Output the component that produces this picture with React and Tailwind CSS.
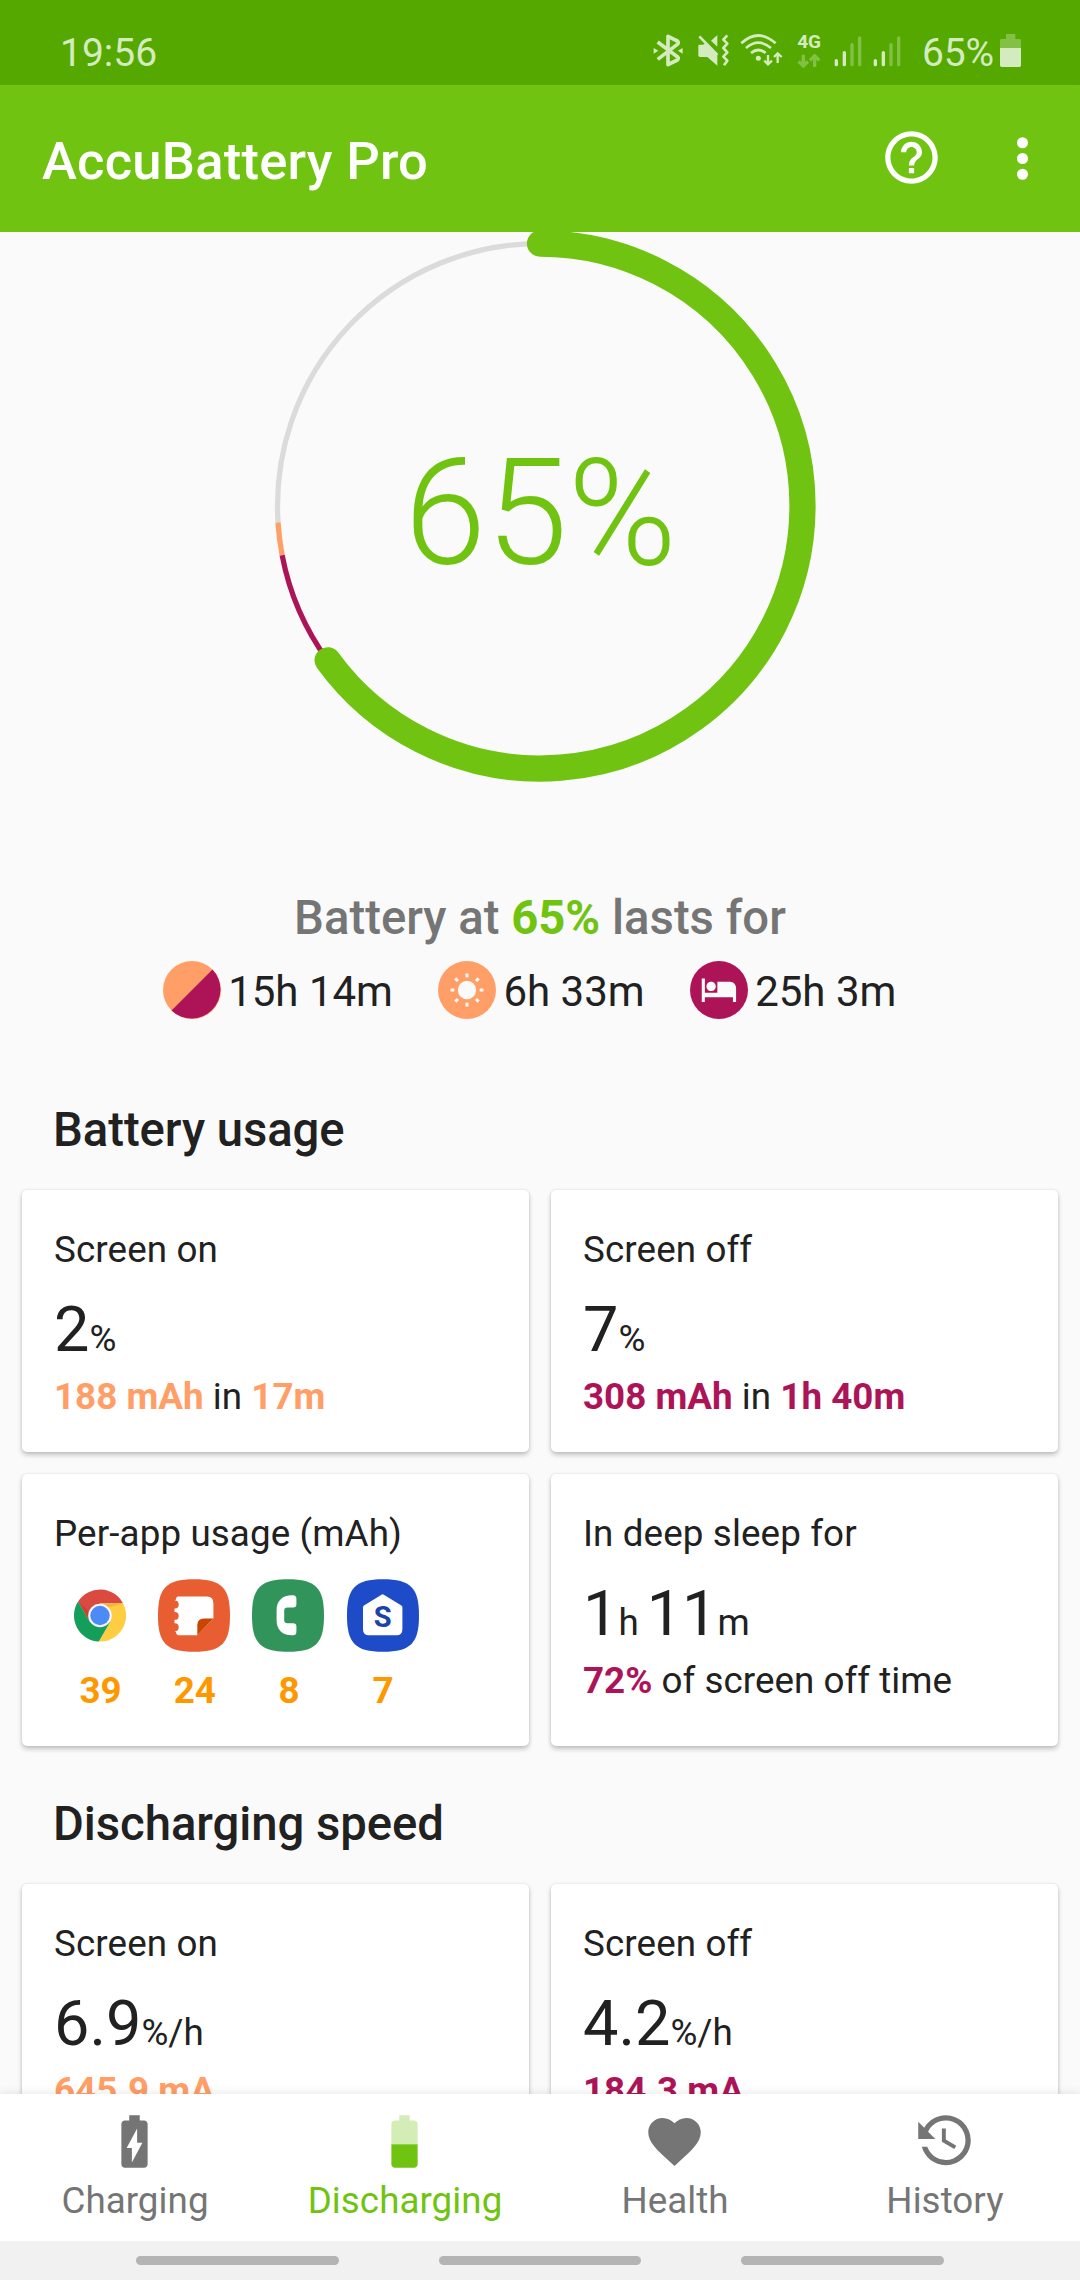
import React from "react";

const LIGHT = "#d4ebbf";
const DIM = "#82c143";

function BluetoothIcon() {
  return (
    <svg className="w-[30px] h-[38px]" viewBox="94 96 90 114" fill="none" stroke={LIGHT} strokeWidth="11">
      <path d="M108 126L167 170Q173 175 167 180L139 194V109L167 123Q173 128 167 133L108 178" strokeLinejoin="round" />
      <path d="M96 144L110 152L96 161Z M183 144L169 152L183 161Z" fill={LIGHT} stroke="none" />
    </svg>
  );
}

function MuteVibrateIcon() {
  return (
    <svg className="ml-[14px] w-[33px] h-[38px]" viewBox="227 96 99 114">
      <path d="M231 137Q231 134 234 134H245L252 130L288 166V197L258 171H236Q231 171 231 166Z" fill={LIGHT} />
      <path d="M269 122L288 105V140Z" fill={LIGHT} />
      <path d="M234 109L288 165" stroke={LIGHT} strokeWidth="8" />
      <path d="M318 106L306 119L318 131L306 144L318 157L306 170L318 182L308 196" fill="none" stroke={LIGHT} strokeWidth="8" strokeLinejoin="round" />
    </svg>
  );
}

function WifiIcon() {
  return (
    <svg className="ml-[10px] w-[43px] h-[38px]" viewBox="357 96 129 114" fill="none" stroke={LIGHT} strokeWidth="8">
      <path d="M361 130Q412 83 464 130" />
      <path d="M375 144Q412 112 450 144" />
      <path d="M390 159Q412 141 434 159" />
      <circle cx="412" cy="175" r="7.5" fill={LIGHT} stroke="none" />
      <path d="M441 165V192M430 182L441 193L453 182" strokeWidth="7" />
      <path d="M470 189V161M459 171L470 160L482 171" strokeWidth="7" />
    </svg>
  );
}

function DataIcon() {
  return (
    <div className="ml-[14px] flex w-[24px] flex-col items-center">
      <span className="h-[20px] text-[19px] leading-[20px] font-bold tracking-[-0.3px] text-[#d4ebbf]">4G</span>
      <svg className="mt-[2px] h-[14px] w-[24px]" viewBox="526 163 72 42" fill="none" stroke={DIM} strokeWidth="10">
        <path d="M545 165V198M531 185L545 199L559 185" />
        <path d="M579 202V169M565 182L579 168L593 182" />
      </svg>
    </div>
  );
}

function SignalIcon({ className }) {
  return (
    <svg className={className} viewBox="640 96 84 114" strokeWidth="10" strokeLinecap="round">
      <path d="M647 182V194M671 158V194" stroke={LIGHT} />
      <path d="M694 134V194M717 114V194" stroke={DIM} />
    </svg>
  );
}

function StatusBar() {
  return (
    <div className="flex h-[85px] shrink-0 items-start bg-[#55a800] pl-[60px] text-[39px] text-[#d4ebbf]">
      <span className="mt-[30px] leading-[46px]">19:56</span>
      <div className="ml-auto flex items-start pt-[32px] pr-[58px]">
        <BluetoothIcon />
        <MuteVibrateIcon />
        <WifiIcon />
        <DataIcon />
        <SignalIcon className="ml-[13px] h-[38px] w-[28px]" />
        <SignalIcon className="ml-[11px] h-[38px] w-[28px]" />
        <span className="-mt-[2px] ml-[21px] w-[74px] leading-[46px] tracking-[-0.2px] whitespace-nowrap">65%</span>
        <svg className="ml-[3px] h-[38px] w-[23px]" viewBox="1137 96 69 114">
          <path d="M1158 102H1186V117H1199Q1203 117 1203 121V144H1140V121Q1140 117 1144 117H1158Z" fill={DIM} />
          <path d="M1140 144H1203V196Q1203 201 1198 201H1145Q1140 201 1140 196Z" fill={LIGHT} />
        </svg>
      </div>
    </div>
  );
}

function AppBar() {
  return (
    <header className="relative z-10 flex h-[147px] shrink-0 items-center bg-[#70c411] pl-[42px] text-white">
      <h1 className="mt-[4px] text-[52.5px] leading-[62px] font-medium tracking-[0.25px]">AccuBattery Pro</h1>
      <svg className="mr-[48px] ml-auto size-[63px] -translate-y-px" viewBox="0 0 24 24" fill="currentColor">
        <path d="M11 18h2v-2h-2v2zm1-16C6.48 2 2 6.48 2 12s4.48 10 10 10 10-4.48 10-10S17.52 2 12 2zm0 18c-4.41 0-8-3.59-8-8s3.59-8 8-8 8 3.59 8 8-3.59 8-8 8zm0-14c-2.21 0-4 1.79-4 4h2c0-1.1.9-2 2-2s2 .9 2 2c0 2-3 1.75-3 5h2c0-2.25 3-2.5 3-5 0-2.21-1.79-4-4-4z" />
      </svg>
      <svg className="mr-[26px] size-[63px]" viewBox="0 0 24 24" fill="currentColor">
        <circle cx="12" cy="6" r="2.1" />
        <circle cx="12" cy="12" r="2.1" />
        <circle cx="12" cy="18" r="2.1" />
      </svg>
    </header>
  );
}

const R = 262.5;

function polar(percent) {
  const a = (percent / 100) * 2 * Math.PI;
  return [276 + R * Math.sin(a), 276 - R * Math.cos(a)];
}

function arc(from, to) {
  const [x1, y1] = polar(from);
  const [x2, y2] = polar(to);
  return `M${x1} ${y1}A${R} ${R} 0 ${to - from > 50 ? 1 : 0} 1 ${x2} ${y2}`;
}

function Gauge() {
  return (
    <div className="mx-auto -mt-[2.5px] grid size-[552px] shrink-0 place-items-center">
      <svg className="col-start-1 row-start-1 size-[552px]" viewBox="0 0 552 552" fill="none">
        <path d={arc(74, 100)} stroke="#dbdbdb" strokeWidth="5.25" />
        <path d={arc(72, 74)} stroke="#ff9e66" strokeWidth="5.25" />
        <path d={arc(65, 72)} stroke="#ad1457" strokeWidth="5.25" />
        <path d={arc(0, 65)} stroke="#70c411" strokeWidth="26.25" strokeLinecap="round" />
      </svg>
      <span className="col-start-1 row-start-1 mt-[17px] ml-[1px] text-[147.5px] leading-[172px] font-light text-[#70c411]">65%</span>
    </div>
  );
}

function MixedIcon() {
  return (
    <svg className="size-[58px]" viewBox="-29 -29 58 58">
      <circle r="29" fill="#ff9e66" />
      <path d="M-20.5 20.5A29 29 0 0 0 20.5 -20.5Z" fill="#ad1457" />
    </svg>
  );
}

function SunIcon() {
  return (
    <svg className="size-[58px]" viewBox="-29 -29 58 58">
      <circle r="29" fill="#ff9e66" />
      <circle r="9.2" fill="#fafafa" />
      {[0, 45, 90, 135, 180, 225, 270, 315].map((a) => (
        <rect key={a} x="-1.5" y="-16.5" width="3" height="3.8" fill="#fafafa" transform={`rotate(${a})`} />
      ))}
    </svg>
  );
}

function BedIcon() {
  return (
    <svg className="size-[58px]" viewBox="-29 -29 58 58">
      <circle r="29" fill="#ad1457" />
      <path
        transform="translate(-18.8 -19.2) scale(1.56)"
        fill="#fafafa"
        d="M7 13c1.66 0 3-1.34 3-3S8.66 7 7 7s-3 1.34-3 3 1.34 3 3 3zm12-6h-8v7H3V5H1v15h2v-3h18v3h2v-9c0-2.21-1.79-4-4-4z"
      />
    </svg>
  );
}

function Lasts() {
  const items = [
    [<MixedIcon />, "15h 14m"],
    [<SunIcon />, "6h 33m"],
    [<BedIcon />, "25h 3m"],
  ];
  return (
    <section className="mt-[108.5px] flex flex-col items-center">
      <p className="text-[47.25px] leading-[56px] font-medium text-[#757575]">
        Battery at <b className="font-bold text-[#70c411]">65%</b> lasts for
      </p>
      <div className="mt-[14.5px] mr-[21px] flex gap-[45px] text-[42px] leading-[50px]">
        {items.map(([icon, text]) => (
          <div key={text} className="flex items-center">
            {icon}
            <span className="mt-[5px] ml-[7.5px]">{text}</span>
          </div>
        ))}
      </div>
    </section>
  );
}

function Heading({ children }) {
  return <h2 className="ml-[53px] text-[47.25px] leading-[56px] font-medium tracking-[-0.05px]">{children}</h2>;
}

function Card({ title, className = "h-[262px]", children }) {
  return (
    <div className={`${className} rounded-[5px] bg-white px-[32px] pt-[38px] shadow-[0_3px_5px_rgba(0,0,0,0.22),0_0_3px_rgba(0,0,0,0.1)]`}>
      <h3 className="leading-[44px] tracking-[0.12px]">{title}</h3>
      {children}
    </div>
  );
}

function Value({ parts }) {
  return (
    <p className="mt-[21px] flex h-[74px] items-baseline leading-[74px]">
      {parts.map(([n, unit], i) => (
        <span key={i} className={i > 0 ? "ml-[8px]" : ""}>
          <span className="text-[63px]">{n}</span>
          {unit}
        </span>
      ))}
    </p>
  );
}

function Detail({ children }) {
  return <p className="mt-[8.5px] leading-[44px] tracking-[0.03px] whitespace-nowrap">{children}</p>;
}

const Orange = ({ children }) => <b className="font-bold text-[#ff9e66]">{children}</b>;
const Purple = ({ children }) => <b className="font-bold text-[#ad1457]">{children}</b>;

const SQUIRCLE = "M36 0C64 0 72 9 72 36.3C72 63.6 64 72.6 36 72.6C8 72.6 0 63.6 0 36.3C0 9 8 0 36 0Z";

function ChromeIcon() {
  return (
    <svg className="h-[73px] w-[72px]" viewBox="-36 -36.3 72 72.6">
      <path d="M-21.9 -14A26 26 0 0 1 23.1 -12H0L-10.4 6Z" fill="#db4a3f" />
      <path d="M23.1 -12A26 26 0 0 1 -1.2 26L10.4 6L0 -12Z" fill="#ffcd41" />
      <path d="M-1.2 26A26 26 0 0 1 -21.9 -14L-10.4 6H10.4Z" fill="#149e5a" />
      <path d="M0 -12H23.1L8 -8Z" fill="#e9a93a" opacity="0.7" />
      <path d="M-10.4 6L-21.9 -14L-11 -4Z" fill="#b23a33" opacity="0.5" />
      <circle r="11.8" fill="#f4f4f4" />
      <circle r="9.7" fill="#4c8bf5" />
    </svg>
  );
}

function NotesIcon() {
  return (
    <svg className="h-[73px] w-[72px]" viewBox="0 0 72 72.6">
      <path d={SQUIRCLE} fill="#e95d32" />
      <path d="M20 17.3H49Q55.4 17.3 55.4 24V39.3L39.3 56H20Q18 55.5 18 53L16.5 51V22L18 20Q18 17.3 20 17.3Z" fill="#fff" />
      <circle cx="16.8" cy="25.3" r="3.9" fill="#e95d32" />
      <circle cx="16.8" cy="36.7" r="3.9" fill="#e95d32" />
      <circle cx="16.8" cy="48" r="3.9" fill="#e95d32" />
      <path d="M39.3 56V46Q39.3 39.3 46 39.3H55.4Z" fill="#c84600" />
    </svg>
  );
}

function PhoneIcon() {
  return (
    <svg className="h-[73px] w-[72px]" viewBox="0 0 72 72.6">
      <path d={SQUIRCLE} fill="#31955b" />
      <path
        d="M40 16H41Q44.4 16 44.4 19.5V25Q44.4 28.3 41 28.3H35.5Q32.2 28.3 32.2 31.5V40.7Q32.2 44 35.5 44H41Q44.4 44 44.4 47V52.5Q44.4 56 41 56H40C30 56 24.6 50 24.6 41V31C24.6 22 30 16 40 16Z"
        fill="#fff"
      />
    </svg>
  );
}

function HomeIcon() {
  return (
    <svg className="h-[73px] w-[72px]" viewBox="0 0 72 72.6">
      <path d={SQUIRCLE} fill="#1e4bc8" />
      <path d="M34.5 15.6Q35.6 14.6 36.8 15.6L54.4 26.4Q55.4 27 55.4 28.5V50Q55.4 56 49.4 56H22Q16 56 16 50V28.5Q16 27 17 26.4Z" fill="#fff" />
      <text x="35.6" y="48.3" textAnchor="middle" fontSize="29" fontWeight="700" fill="#1a44a8" fontFamily="Roboto, sans-serif">
        S
      </text>
    </svg>
  );
}

function AppUsage() {
  const apps = [
    [<ChromeIcon />, 39],
    [<NotesIcon />, 24],
    [<PhoneIcon />, 8],
    [<HomeIcon />, 7],
  ];
  return (
    <div className="mt-[23px] -ml-[1px] flex">
      {apps.map(([icon, n]) => (
        <div key={n} className="flex w-[94.2px] flex-col items-center">
          {icon}
          <b className="mt-[17px] ml-[1px] leading-[44px] font-bold text-[#ff9800]">{n}</b>
        </div>
      ))}
    </div>
  );
}

function NavItem({ label, active, children }) {
  return (
    <div className={`flex flex-1 flex-col items-center pt-[16px] ${active ? "text-[#70c411]" : "text-[#757575]"}`}>
      <svg className="mr-[1px] size-[63px]" viewBox="0 0 24 24" fill="currentColor">
        {children}
      </svg>
      <span className="mt-[6px] leading-[44px] tracking-[0.05px]">{label}</span>
    </div>
  );
}

function BottomNav() {
  return (
    <nav className="relative z-10 flex h-[147px] shrink-0 bg-white shadow-[0_-2px_8px_rgba(0,0,0,0.08)]">
      <NavItem label="Charging">
        <path d="M15.67 4H14V2h-4v2H8.33C7.6 4 7 4.6 7 5.33v15.33C7 21.4 7.6 22 8.33 22h7.33c.74 0 1.34-.6 1.34-1.33V5.33C17 4.6 16.4 4 15.67 4zM11 20v-5.5H9L13 7v5.5h2L11 20z" />
      </NavItem>
      <NavItem label="Discharging" active>
        <path fillOpacity=".3" d="M17 5.33C17 4.6 16.4 4 15.67 4H14V2h-4v2H8.33C7.6 4 7 4.6 7 5.33V13h10V5.33z" />
        <path d="M7 13v7.67C7 21.4 7.6 22 8.33 22h7.33c.74 0 1.34-.6 1.34-1.33V13H7z" />
      </NavItem>
      <NavItem label="Health">
        <path d="M12 21.35l-1.45-1.32C5.4 15.36 2 12.28 2 8.5 2 5.42 4.42 3 7.5 3c1.74 0 3.41.81 4.5 2.09C13.09 3.81 14.76 3 16.5 3 19.58 3 22 5.42 22 8.5c0 3.78-3.4 6.86-8.55 11.54L12 21.35z" />
      </NavItem>
      <NavItem label="History">
        <path d="M11,7V12.11L15.71,14.9L16.5,13.6L12.5,11.25V7M12.5,2C8.97,2 5.91,3.92 4.27,6.77L2,4.5V11H8.5L5.75,8.25C6.96,5.73 9.5,4 12.5,4A7.5,7.5 0 0,1 20,11.5A7.5,7.5 0 0,1 12.5,19C9.23,19 6.47,16.91 5.44,14H3.34C4.44,18.03 8.11,21 12.5,21C17.74,21 22,16.75 22,11.5A9.5,9.5 0 0,0 12.5,2Z" />
      </NavItem>
    </nav>
  );
}

function GestureBar() {
  return (
    <div className="relative z-10 flex h-[39px] shrink-0 justify-center gap-[100px] bg-[#f1f1f1] pt-[15px]">
      <span className="h-[9px] w-[202.5px] rounded-full bg-[#b4b4b4]" />
      <span className="h-[9px] w-[202.5px] rounded-full bg-[#b4b4b4]" />
      <span className="h-[9px] w-[202.5px] rounded-full bg-[#b4b4b4]" />
    </div>
  );
}

export default function App() {
  return (
    <div className="flex h-[2280px] w-[1080px] flex-col overflow-hidden bg-[#fafafa] font-['Roboto',sans-serif] text-[36.75px] text-[#212121]">
      <StatusBar />
      <AppBar />
      <main className="min-h-0 flex-1 overflow-hidden">
        <Gauge />
        <Lasts />
        <div className="mt-[83px]">
          <Heading>Battery usage</Heading>
        </div>
        <div className="mt-[32px] grid grid-cols-2 gap-[22px] px-[22px]">
          <Card title="Screen on">
            <Value parts={[["2", "%"]]} />
            <Detail>
              <Orange>188 mAh</Orange> in <Orange>17m</Orange>
            </Detail>
          </Card>
          <Card title="Screen off">
            <Value parts={[["7", "%"]]} />
            <Detail>
              <Purple>308 mAh</Purple> in <Purple>1h 40m</Purple>
            </Detail>
          </Card>
          <Card title="Per-app usage (mAh)" className="h-[272px]">
            <AppUsage />
          </Card>
          <Card title="In deep sleep for" className="h-[272px]">
            <Value parts={[["1", "h"], ["11", "m"]]} />
            <Detail>
              <Purple>72%</Purple> of screen off time
            </Detail>
          </Card>
        </div>
        <div className="mt-[50px]">
          <Heading>Discharging speed</Heading>
        </div>
        <div className="mt-[32px] grid grid-cols-2 gap-[22px] px-[22px]">
          <Card title="Screen on">
            <Value parts={[["6.9", "%/h"]]} />
            <Detail>
              <Orange>645.9 mA</Orange>
            </Detail>
          </Card>
          <Card title="Screen off">
            <Value parts={[["4.2", "%/h"]]} />
            <Detail>
              <Purple>184.3 mA</Purple>
            </Detail>
          </Card>
        </div>
      </main>
      <BottomNav />
      <GestureBar />
    </div>
  );
}
